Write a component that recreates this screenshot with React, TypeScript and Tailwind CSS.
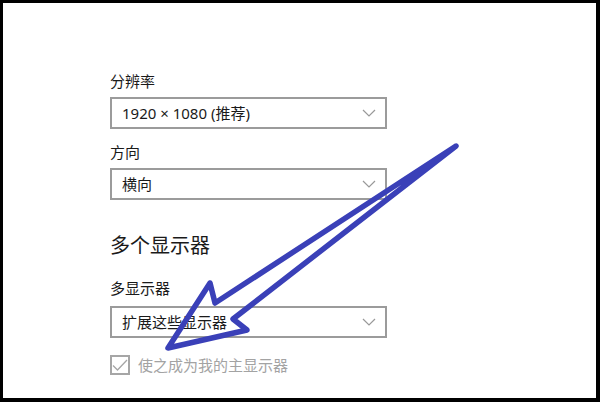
import React from "react";

const Chevron = () => (
  <svg width="14" height="8" viewBox="0 0 14 8" fill="none">
    <path d="M1 1 L7 7 L13 1" stroke="#999999" strokeWidth="1.2" />
  </svg>
);

const Select = ({ text }: { text: string }) => (
  <div className="flex h-[32px] w-[277px] items-center justify-between border-2 border-[#9b9b9b] bg-white pl-[10px] pr-[9px]">
    <span className="text-[15px] leading-none text-[#1a1a1a]">{text}</span>
    <Chevron />
  </div>
);

export default function App() {
  return (
    <div
      className="relative h-[402px] w-[600px] overflow-hidden border-t-[3px] border-l-[3px] border-r-[4px] border-b-[4px] border-black bg-white"
      style={{ fontFamily: '"Noto Sans", "Noto Sans CJK SC", sans-serif' }}
    >
      <div className="flex flex-col pl-[107px] pt-[68px]">
        <div className="h-[20px] text-[15px] leading-[20px] text-[#1a1a1a]">分辨率</div>
        <div className="mt-[6px]">
          <Select text="1920 × 1080 (推荐)" />
        </div>
        <div className="mt-[13px] h-[20px] text-[15px] leading-[20px] text-[#1a1a1a]">方向</div>
        <div className="mt-[6px]">
          <Select text="横向" />
        </div>
        <div className="mt-[32px] h-[28px] text-[20px] leading-[28px] text-[#1a1a1a]">多个显示器</div>
        <div className="mt-[18px] h-[20px] text-[15px] leading-[20px] text-[#1a1a1a]">多显示器</div>
        <div className="mt-[8px]">
          <Select text="扩展这些显示器" />
        </div>
        <div className="mt-[17px] flex items-center gap-[8px]">
          <div className="flex h-[20px] w-[20px] items-center justify-center border-2 border-[#a6a6a6]">
            <svg width="16" height="13" viewBox="0 0 16 13" fill="none">
              <path d="M1 6.5 L5.5 11 L15 1" stroke="#a6a6a6" strokeWidth="1.3" />
            </svg>
          </div>
          <span className="text-[15px] leading-[20px] text-[#a3a3a3]">使之成为我的主显示器</span>
        </div>
      </div>
      <svg
        className="pointer-events-none absolute left-[-3px] top-[-3px]"
        width="600"
        height="402"
        viewBox="0 0 600 402"
        fill="none"
      >
        <path
          d="M456 146 L215 303 L210 283 L168 348 L247 330 L233 319 Z"
          stroke="#3a40b8"
          strokeWidth="5.5"
          strokeLinejoin="round"
          strokeLinecap="round"
        />
      </svg>
    </div>
  );
}
